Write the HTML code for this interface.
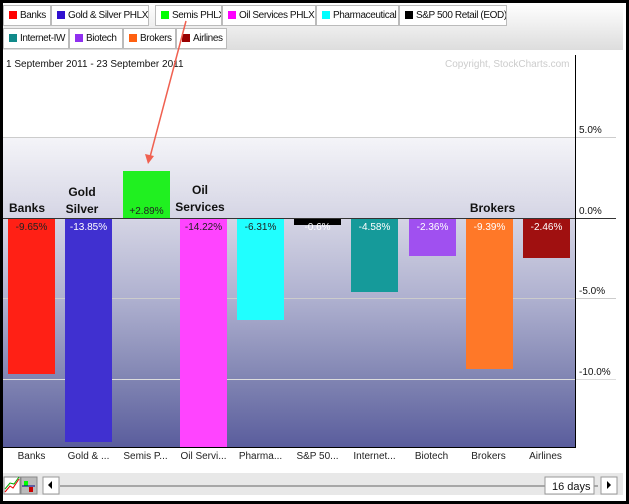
<!DOCTYPE html>
<html><head><style>
body{margin:0;width:629px;height:504px;overflow:hidden;background:#fff;font-family:"Liberation Sans",sans-serif;position:relative}
.a{position:absolute}
.tab{position:absolute;height:21px;background:#fff;border:1px solid #bbb;box-sizing:border-box;font-size:10px;line-height:19px;padding-left:16px;color:#111;white-space:nowrap;overflow:hidden;letter-spacing:-0.4px}
.tab i{position:absolute;left:5px;top:5px;width:8px;height:8px}
.bar{position:absolute;width:47px}
.v{position:absolute;font-size:10px;text-align:center;width:47px;color:#fff}
.lab{position:absolute;font-size:12px;font-weight:bold;color:#111;text-align:center;line-height:17px}
.x{position:absolute;top:451px;font-size:10px;color:#222;width:57px;text-align:center}
.r{position:absolute;left:579px;font-size:10px;color:#111}
</style></head><body>
<div class="a" style="left:0;top:0;width:629px;height:504px;border:3px solid #000;box-sizing:border-box"></div>
<div class="a" style="left:3px;top:3px;width:620px;height:47px;background:linear-gradient(#fff,#ddd)"></div>
<div class="tab" style="left:3px;top:5px;width:48px"><i style="background:#f00"></i>Banks</div>
<div class="tab" style="left:51px;top:5px;width:98px"><i style="background:#3010d0"></i>Gold &amp; Silver PHLX</div>
<div class="tab" style="left:155px;top:5px;width:67px"><i style="background:#0f0"></i>Semis PHLX</div>
<div class="tab" style="left:222px;top:5px;width:94px"><i style="background:#f0f"></i>Oil Services PHLX</div>
<div class="tab" style="left:316px;top:5px;width:83px"><i style="background:#0ff"></i>Pharmaceutical</div>
<div class="tab" style="left:399px;top:5px;width:108px"><i style="background:#000"></i>S&amp;P 500 Retail (EOD)</div>
<div class="tab" style="left:3px;top:28px;width:66px"><i style="background:#108a8a"></i>Internet-IW</div>
<div class="tab" style="left:69px;top:28px;width:54px"><i style="background:#9030f0"></i>Biotech</div>
<div class="tab" style="left:123px;top:28px;width:53px"><i style="background:#ff6010"></i>Brokers</div>
<div class="tab" style="left:176px;top:28px;width:51px"><i style="background:#900"></i>Airlines</div>
<div class="a" style="left:3px;top:50px;width:572px;height:397px;background:linear-gradient(#fff 0,#fff 87px,#f4f4f8 88px,#d4d4e4 170px,#aeb0cf 250px,#8084b2 330px,#5a5d9d 397px)"></div>
<div class="a" style="left:3px;top:137px;width:613px;height:1px;background:#ccc"></div>
<div class="a" style="left:3px;top:298px;width:613px;height:1px;background:#ccc"></div>
<div class="a" style="left:3px;top:379px;width:613px;height:1px;background:#ddd"></div>
<div class="a" style="left:3px;top:218px;width:613px;height:1px;background:#333"></div>
<div class="a" style="left:575px;top:55px;width:1px;height:392px;background:#000"></div>
<div class="a" style="left:3px;top:447px;width:573px;height:1px;background:#000"></div>
<div class="a" style="left:6px;top:59px;font-size:10px;color:#111">1 September 2011 - 23 September 2011</div>
<div class="a" style="left:445px;top:59px;font-size:10px;color:#ccc">Copyright, StockCharts.com</div>
<div class="r" style="top:125px">5.0%</div><div class="r" style="top:206px">0.0%</div>
<div class="r" style="top:286px">-5.0%</div><div class="r" style="top:367px">-10.0%</div>
<div class="bar" style="left:8px;top:219px;height:155px;background:#ff2015"></div>
<div class="bar" style="left:65px;top:219px;height:223px;background:#4030d0"></div>
<div class="bar" style="left:123px;top:171px;height:47px;background:#20f020"></div>
<div class="bar" style="left:180px;top:219px;height:228px;background:#ff44ff"></div>
<div class="bar" style="left:237px;top:219px;height:101px;background:#20ffff"></div>
<div class="bar" style="left:294px;top:219px;height:6px;background:#000"></div>
<div class="bar" style="left:351px;top:219px;height:73px;background:#159a9a"></div>
<div class="bar" style="left:409px;top:219px;height:37px;background:#a050f0"></div>
<div class="bar" style="left:466px;top:219px;height:150px;background:#ff7828"></div>
<div class="bar" style="left:523px;top:219px;height:39px;background:#a01010"></div>
<div class="v" style="left:8px;top:222px;color:#222">-9.65%</div>
<div class="v" style="left:65px;top:222px">-13.85%</div>
<div class="v" style="left:123px;top:206px;color:#222">+2.89%</div>
<div class="v" style="left:180px;top:222px;color:#222">-14.22%</div>
<div class="v" style="left:237px;top:222px;color:#222">-6.31%</div>
<div class="v" style="left:294px;top:222px">-0.6%</div>
<div class="v" style="left:351px;top:222px">-4.58%</div>
<div class="v" style="left:409px;top:222px">-2.36%</div>
<div class="v" style="left:466px;top:222px">-9.39%</div>
<div class="v" style="left:523px;top:222px">-2.46%</div>
<div class="lab" style="left:2px;top:200px;width:50px">Banks</div>
<div class="lab" style="left:57px;top:184px;width:50px">Gold<br>Silver</div>
<div class="lab" style="left:172px;top:182px;width:56px">Oil<br>Services</div>
<div class="lab" style="left:465px;top:200px;width:55px">Brokers</div>
<div class="x" style="left:3px">Banks</div><div class="x" style="left:60px">Gold &amp; ...</div>
<div class="x" style="left:117px">Semis P...</div><div class="x" style="left:175px">Oil Servi...</div>
<div class="x" style="left:232px">Pharma...</div><div class="x" style="left:289px">S&amp;P 50...</div>
<div class="x" style="left:346px">Internet...</div><div class="x" style="left:403px">Biotech</div>
<div class="x" style="left:460px">Brokers</div><div class="x" style="left:517px">Airlines</div>
<svg class="a" style="left:0;top:0" width="629" height="504">
<line x1="186" y1="21" x2="150" y2="157" stroke="#f06050" stroke-width="1.5"/>
<polygon points="145,154 154,156 148,164" fill="#f06050"/>
<rect x="3" y="473" width="620" height="22" fill="#e8e8e8"/>
<rect x="4" y="477" width="16" height="17" fill="#fff" stroke="#888"/>
<polyline points="5,492 10,486 13,488 19,479" stroke="#e00" fill="none"/>
<polyline points="5,489 10,483 14,484 19,477" stroke="#0a0" fill="none"/>
<rect x="21" y="477" width="16" height="17" fill="#bbb" stroke="#888"/>
<rect x="24" y="481" width="4" height="5" fill="#0f0"/><rect x="29" y="487" width="4" height="5" fill="#c00"/>
<line x1="22" y1="486" x2="35" y2="486" stroke="#008"/>
<rect x="43" y="477" width="16" height="17" fill="#fff" stroke="#999"/>
<polygon points="52,481 48,485 52,489" fill="#000"/>
<line x1="60" y1="486" x2="598" y2="486" stroke="#666"/>
<rect x="545" y="477" width="49" height="17" fill="#fff" stroke="#999"/>
<text x="552" y="490" font-size="11" font-family="Liberation Sans" fill="#111">16 days</text>
<rect x="601" y="477" width="16" height="17" fill="#fff" stroke="#999"/>
<polygon points="607,481 611,485 607,489" fill="#000"/>
</svg>
</body></html>
